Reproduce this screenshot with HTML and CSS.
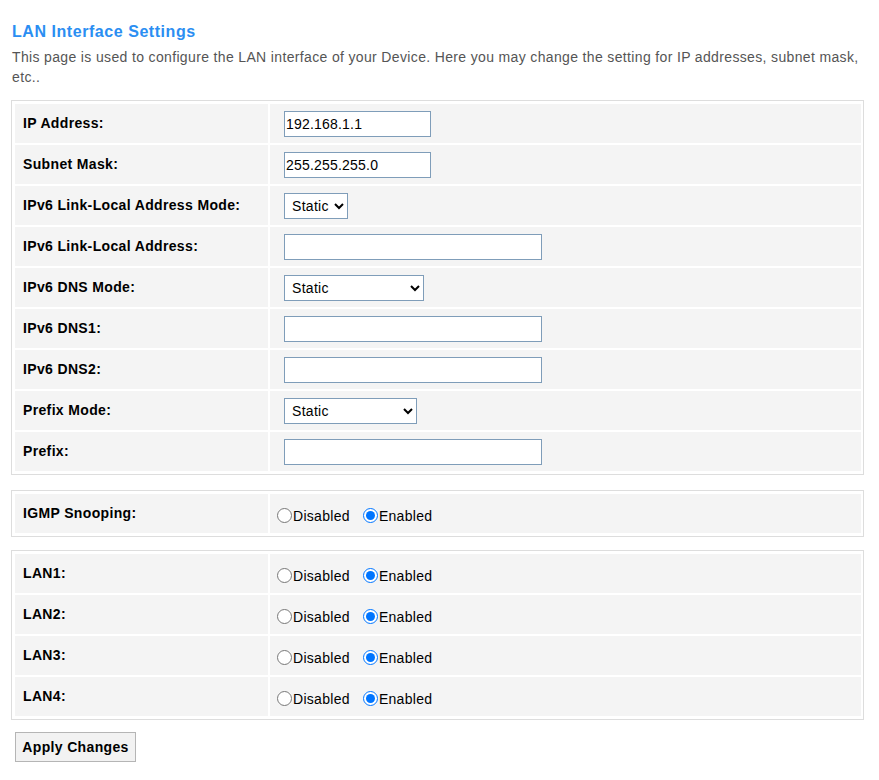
FILE: index.html
```html
<!DOCTYPE html>
<html>
<head>
<meta charset="utf-8">
<title>LAN Interface Settings</title>
<link rel="stylesheet" href="styles.css">
</head>
<body>
<div class="page">
  <h1 class="title">LAN Interface Settings</h1>
  <p class="desc">This page is used to configure the LAN interface of your Device. Here you may change the setting for IP addresses, subnet mask, etc..</p>

  <form class="form">
    <div class="panel">
      <div class="lbl">IP Address:</div>
      <div class="val"><input class="txt txt-short" type="text" value="192.168.1.1"></div>

      <div class="lbl">Subnet Mask:</div>
      <div class="val"><input class="txt txt-short" type="text" value="255.255.255.0"></div>

      <div class="lbl">IPv6 Link-Local Address Mode:</div>
      <div class="val"><select class="sel sel-xs"><option>Static</option><option>Auto</option></select></div>

      <div class="lbl">IPv6 Link-Local Address:</div>
      <div class="val"><input class="txt txt-long" type="text" value=""></div>

      <div class="lbl">IPv6 DNS Mode:</div>
      <div class="val"><select class="sel sel-lg"><option>Static</option><option>Auto</option></select></div>

      <div class="lbl">IPv6 DNS1:</div>
      <div class="val"><input class="txt txt-long" type="text" value=""></div>

      <div class="lbl">IPv6 DNS2:</div>
      <div class="val"><input class="txt txt-long" type="text" value=""></div>

      <div class="lbl">Prefix Mode:</div>
      <div class="val"><select class="sel sel-md"><option>Static</option><option>Auto</option></select></div>

      <div class="lbl">Prefix:</div>
      <div class="val"><input class="txt txt-long" type="text" value=""></div>
    </div>

    <div class="panel panel-igmp">
      <div class="lbl">IGMP Snooping:</div>
      <div class="val val-radio">
        <label class="opt"><input class="rad" type="radio" name="igmp">Disabled</label>
        <label class="opt"><input class="rad" type="radio" name="igmp" checked>Enabled</label>
      </div>
    </div>

    <div class="panel panel-lan">
      <div class="lbl">LAN1:</div>
      <div class="val val-radio">
        <label class="opt"><input class="rad" type="radio" name="lan1">Disabled</label>
        <label class="opt"><input class="rad" type="radio" name="lan1" checked>Enabled</label>
      </div>

      <div class="lbl">LAN2:</div>
      <div class="val val-radio">
        <label class="opt"><input class="rad" type="radio" name="lan2">Disabled</label>
        <label class="opt"><input class="rad" type="radio" name="lan2" checked>Enabled</label>
      </div>

      <div class="lbl">LAN3:</div>
      <div class="val val-radio">
        <label class="opt"><input class="rad" type="radio" name="lan3">Disabled</label>
        <label class="opt"><input class="rad" type="radio" name="lan3" checked>Enabled</label>
      </div>

      <div class="lbl">LAN4:</div>
      <div class="val val-radio">
        <label class="opt"><input class="rad" type="radio" name="lan4">Disabled</label>
        <label class="opt"><input class="rad" type="radio" name="lan4" checked>Enabled</label>
      </div>
    </div>

    <button class="btn" type="button">Apply Changes</button>
  </form>
</div>
</body>
</html>
```

FILE: styles.css
```css
html, body {
  margin: 0;
  padding: 0;
  background: #ffffff;
}

body {
  font-family: Arial, "Liberation Sans", sans-serif;
  font-size: 14px;
  color: #000000;
  letter-spacing: 0.3px;
}

.page {
  padding: 23px 12px 20px 0;
}

.title {
  margin: 0 0 0 12px;
  font-size: 16px;
  line-height: 18px;
  font-weight: bold;
  letter-spacing: 0.55px;
  color: #2b8ef2;
}

.desc {
  margin: 6px 0 0 12px;
  font-size: 14px;
  line-height: 20px;
  letter-spacing: 0.35px;
  color: #555555;
}

.form {
  margin: 13px 0 0 11px;
}

.panel {
  width: 853px;
  box-sizing: border-box;
  border: 1px solid #dddddd;
  padding: 3px 2px 3px 3px;
  display: grid;
  grid-template-columns: 253px 1fr;
  grid-auto-rows: 39px;
  gap: 2px;
}

.panel-igmp {
  margin-top: 15px;
}

.panel-lan {
  margin-top: 13px;
}

.lbl {
  background: #f4f4f4;
  display: flex;
  align-items: center;
  padding-left: 8px;
  font-weight: bold;
  font-size: 14px;
  letter-spacing: 0.35px;
  padding-bottom: 2px;
}

.val {
  background: #f4f4f4;
  display: flex;
  align-items: center;
  padding-left: 14px;
}

.val-radio {
  padding-left: 6px;
  padding-top: 4px;
}

.txt {
  box-sizing: border-box;
  height: 26px;
  border: 1px solid #7f9db9;
  background: #ffffff;
  padding: 0 1px;
  margin: 0;
  font-family: Arial, "Liberation Sans", sans-serif;
  font-size: 14px;
  letter-spacing: 0.2px;
  color: #000000;
  outline: none;
}

.txt-short {
  width: 147px;
}

.txt-long {
  width: 258px;
}

.sel {
  box-sizing: border-box;
  height: 26px;
  border: 1px solid #7f9db9;
  border-radius: 0;
  background-color: #ffffff;
  margin: 0;
  padding: 0 0 0 3px;
  font-family: Arial, "Liberation Sans", sans-serif;
  font-size: 14px;
  letter-spacing: 0.3px;
  color: #000000;
}

.sel-xs {
  width: 64px;
}

.sel-lg {
  width: 140px;
}

.sel-md {
  width: 133px;
}

.opt {
  display: inline-flex;
  align-items: center;
  margin-right: 12px;
}

.rad {
  width: 15px;
  height: 15px;
  margin: 0 1px 0 1px;
}

.btn {
  margin-top: 12px;
  margin-left: 4px;
  box-sizing: border-box;
  width: 121px;
  height: 30px;
  border: 1px solid #b5b5b5;
  border-radius: 0;
  background: #f2f2f2;
  font-family: Arial, "Liberation Sans", sans-serif;
  font-size: 14px;
  font-weight: bold;
  letter-spacing: 0.35px;
  color: #000000;
  padding: 0;
}
```
